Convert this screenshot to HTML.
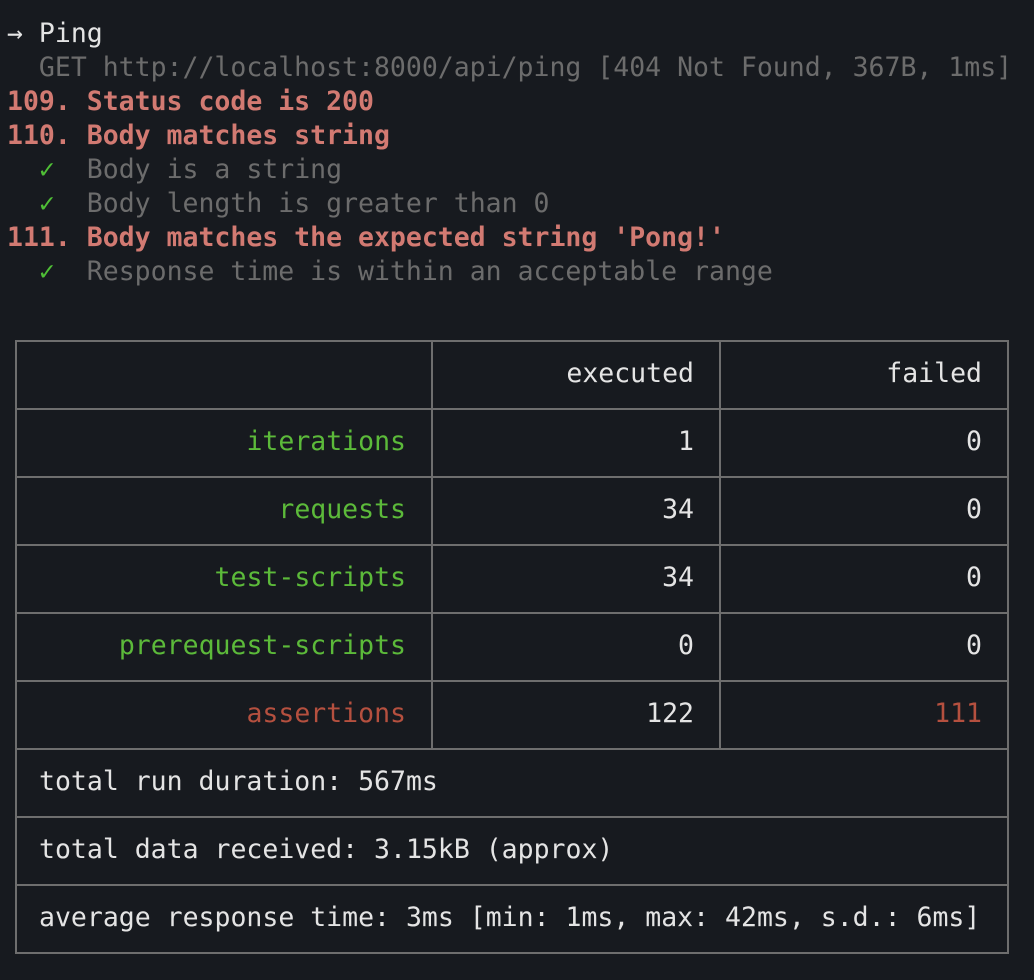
<!DOCTYPE html>
<html><head><meta charset="utf-8"><style>
html,body{margin:0;padding:0;background:#171a1f;width:1034px;height:980px;overflow:hidden}
body{font-family:"DejaVu Sans Mono","Liberation Mono",monospace;font-size:26.5px;color:#e4e4e4;position:relative}
.l{position:absolute;left:7px;height:34px;line-height:34px;white-space:pre}
.g{color:#6c6c6c}.r{color:#d27a72;font-weight:bold}.ok{color:#4fbf36}
.h{position:absolute;background:#6e6e6e;height:2px}
.v{position:absolute;background:#6e6e6e;width:2px}
.c{position:absolute;height:68px;line-height:68px;white-space:pre;text-align:right}
.gr{color:#5cba3a}.rd{color:#b5503f}
</style></head><body>
<div class="l" style="top:17px">→ Ping</div>
<div class="l g" style="top:51px">  GET http://localhost:8000/api/ping [404 Not Found, 367B, 1ms]</div>
<div class="l r" style="top:85px">109. Status code is 200</div>
<div class="l r" style="top:119px">110. Body matches string</div>
<div class="l g" style="top:153px">  <span class="ok">✓</span>  Body is a string</div>
<div class="l g" style="top:187px">  <span class="ok">✓</span>  Body length is greater than 0</div>
<div class="l r" style="top:221px">111. Body matches the expected string 'Pong!'</div>
<div class="l g" style="top:255px">  <span class="ok">✓</span>  Response time is within an acceptable range</div>

<div class="h" style="left:15px;width:994px;top:340px"></div>
<div class="h" style="left:15px;width:994px;top:408px"></div>
<div class="h" style="left:15px;width:994px;top:476px"></div>
<div class="h" style="left:15px;width:994px;top:544px"></div>
<div class="h" style="left:15px;width:994px;top:612px"></div>
<div class="h" style="left:15px;width:994px;top:680px"></div>
<div class="h" style="left:15px;width:994px;top:748px"></div>
<div class="h" style="left:15px;width:994px;top:816px"></div>
<div class="h" style="left:15px;width:994px;top:884px"></div>
<div class="h" style="left:15px;width:994px;top:952px"></div>
<div class="v" style="left:15px;top:340px;height:614px"></div>
<div class="v" style="left:1007px;top:340px;height:614px"></div>
<div class="v" style="left:431px;top:340px;height:410px"></div>
<div class="v" style="left:719px;top:340px;height:410px"></div>

<div class="c" style="right:340px;top:340px">executed</div>
<div class="c" style="right:52px;top:340px">failed</div>

<div class="c gr" style="right:628px;top:408px">iterations</div>
<div class="c" style="right:340px;top:408px">1</div>
<div class="c" style="right:52px;top:408px">0</div>
<div class="c gr" style="right:628px;top:476px">requests</div>
<div class="c" style="right:340px;top:476px">34</div>
<div class="c" style="right:52px;top:476px">0</div>
<div class="c gr" style="right:628px;top:544px">test-scripts</div>
<div class="c" style="right:340px;top:544px">34</div>
<div class="c" style="right:52px;top:544px">0</div>
<div class="c gr" style="right:628px;top:612px">prerequest-scripts</div>
<div class="c" style="right:340px;top:612px">0</div>
<div class="c" style="right:52px;top:612px">0</div>
<div class="c rd" style="right:628px;top:680px">assertions</div>
<div class="c" style="right:340px;top:680px">122</div>
<div class="c rd" style="right:52px;top:680px">111</div>

<div class="c" style="left:39px;top:748px;text-align:left">total run duration: 567ms</div>
<div class="c" style="left:39px;top:816px;text-align:left">total data received: 3.15kB (approx)</div>
<div class="c" style="left:39px;top:884px;text-align:left">average response time: 3ms [min: 1ms, max: 42ms, s.d.: 6ms]</div>
</body></html>
